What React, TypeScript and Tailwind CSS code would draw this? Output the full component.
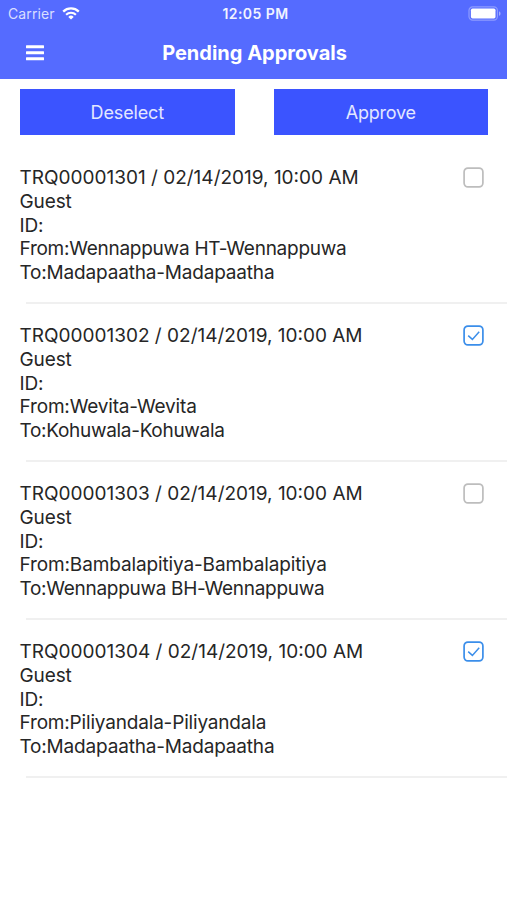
import React, { useState } from "react";

type Approval = {
  id: string;
  date: string;
  type: string;
  from: string;
  to: string;
  fromClass: string;
  toClass: string;
};

const approvals: Approval[] = [
  {
    id: "TRQ00001301",
    date: "02/14/2019, 10:00 AM",
    type: "Guest",
    from: "Wennappuwa HT-Wennappuwa",
    to: "Madapaatha-Madapaatha",
    fromClass: "tracking-[-0.26px]",
    toClass: "tracking-[-0.18px]",
  },
  {
    id: "TRQ00001302",
    date: "02/14/2019, 10:00 AM",
    type: "Guest",
    from: "Wevita-Wevita",
    to: "Kohuwala-Kohuwala",
    fromClass: "tracking-[-0.17px]",
    toClass: "tracking-[-0.3px]",
  },
  {
    id: "TRQ00001303",
    date: "02/14/2019, 10:00 AM",
    type: "Guest",
    from: "Bambalapitiya-Bambalapitiya",
    to: "Wennappuwa BH-Wennappuwa",
    fromClass: "tracking-[-0.13px]",
    toClass: "tracking-[-0.29px]",
  },
  {
    id: "TRQ00001304",
    date: "02/14/2019, 10:00 AM",
    type: "Guest",
    from: "Piliyandala-Piliyandala",
    to: "Madapaatha-Madapaatha",
    fromClass: "tracking-[-0.18px]",
    toClass: "tracking-[-0.18px]",
  },
];

function StatusBar() {
  return (
    <div className="grid h-[27px] grid-cols-3 items-center pl-[8px] pr-[6px]">
      <div className="flex items-center gap-[7px]">
        <span className="text-[14px] tracking-[0.1px] text-[#d9deff]">
          Carrier
        </span>
        <svg width="18" height="13" viewBox="0 0 18 13" fill="none">
          <path d="M1.2 4.6a11.2 11.2 0 0 1 15.6 0" stroke="#fff" strokeWidth="2.3" />
          <path d="M4.1 7.7a7 7 0 0 1 9.8 0" stroke="#fff" strokeWidth="2.1" />
          <path d="M9 12.6 6.3 9.9a3.9 3.9 0 0 1 5.4 0z" fill="#fff" />
        </svg>
      </div>
      <span className="pl-[2px] text-center text-[14px] font-semibold tracking-[0.45px] text-[#f1f3ff]">
        12:05 PM
      </span>
      <svg
        className="justify-self-end"
        width="33"
        height="15"
        viewBox="0 0 33 15"
        fill="none"
      >
        <rect x="1" y="0.9" width="28.4" height="13.2" rx="3.6" stroke="#8e9cff" strokeWidth="1.2" />
        <rect x="2.9" y="2.6" width="24.6" height="9.8" rx="1.6" fill="#fff" />
        <path d="M31 5.2v4.6c1-.4 1.5-1.3 1.5-2.3S32 5.6 31 5.2z" fill="#a4afff" />
      </svg>
    </div>
  );
}

function CheckBox({
  checked,
  onChange,
}: {
  checked: boolean;
  onChange: () => void;
}) {
  return (
    <button
      type="button"
      role="checkbox"
      aria-checked={checked}
      onClick={onChange}
      className="mt-px h-[21px] w-[21px]"
    >
      <svg width="21" height="21" viewBox="0 0 21 21" fill="none">
        <rect
          x="1.1"
          y="1.1"
          width="18.8"
          height="18.8"
          rx="3.8"
          stroke={checked ? "#3b8eea" : "#bdbdbd"}
          strokeWidth="1.7"
        />
        {checked && (
          <path
            d="M5.2 10.6 9.4 14.4 16.2 6.8"
            stroke="#3b8eea"
            strokeWidth="1.5"
          />
        )}
      </svg>
    </button>
  );
}

export default function App() {
  const [selected, setSelected] = useState<string[]>([
    "TRQ00001302",
    "TRQ00001304",
  ]);

  const toggle = (id: string) => {
    setSelected((prev) =>
      prev.includes(id) ? prev.filter((item) => item !== id) : [...prev, id]
    );
  };

  return (
    <div className="min-h-screen w-full bg-white font-['Inter',sans-serif] text-[#262626]">
      <header className="h-[79px] bg-[#556bff]">
        <StatusBar />
        <div className="grid h-[52px] grid-cols-[60px_1fr_60px] items-center">
          <button type="button" aria-label="Menu" className="ml-[26px] w-[18px]">
            <svg width="18" height="16" viewBox="0 0 18 16" fill="#fff">
              <rect y="0.2" width="18" height="3" rx="0.5" />
              <rect y="6.2" width="18" height="3" rx="0.5" />
              <rect y="12.2" width="18" height="3" rx="0.5" />
            </svg>
          </button>
          <h1 className="pl-[2px] text-center text-[20px] font-bold text-white">
            Pending Approvals
          </h1>
        </div>
      </header>

      <div className="flex gap-[39px] pl-5 pr-[19px] pt-[10px]">
        <button
          type="button"
          onClick={() => setSelected([])}
          className="h-[46px] flex-1 bg-[#3b54ff] text-[18px] tracking-[-0.15px] text-[#e3e7ff]"
        >
          Deselect
        </button>
        <button
          type="button"
          className="h-[46px] flex-1 bg-[#3b54ff] text-[18px] tracking-[-0.25px] text-[#e3e7ff]"
        >
          Approve
        </button>
      </div>

      <ul className="mt-[10px]">
        {approvals.map((item) => (
          <li key={item.id} className="h-[158px]">
            <div className="flex h-[157px] items-start justify-between pl-[19.5px] pr-[23px] pt-[21px]">
              <div className="text-[19px] leading-[23.75px]">
                <p>
                  {item.id} / {item.date}
                </p>
                <p className="tracking-[-0.1px]">{item.type}</p>
                <p className="tracking-[-0.1px]">ID:</p>
                <p className={item.fromClass}>From:{item.from}</p>
                <p className={item.toClass}>To:{item.to}</p>
              </div>
              <CheckBox
                checked={selected.includes(item.id)}
                onChange={() => toggle(item.id)}
              />
            </div>
            <div className="ml-[26px] h-[2px] bg-[#f0f0f0]" />
          </li>
        ))}
      </ul>
    </div>
  );
}
